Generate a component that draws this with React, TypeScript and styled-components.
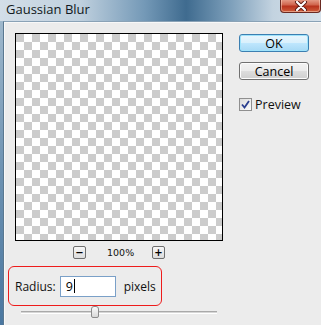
import React from "react";
import styled, { createGlobalStyle } from "styled-components";

const Global = createGlobalStyle`
  html, body { margin: 0; padding: 0; }
  body { width: 321px; height: 325px; overflow: hidden; font-family: "Noto Sans", "DejaVu Sans", sans-serif; }
  #root { width: 321px; height: 325px; }
`;

const Window = styled.div`
  width: 321px;
  height: 325px;
  display: flex;
  flex-direction: column;
  background: linear-gradient(90deg, #d3dee8 0%, #bfd0de 25%, #7499b7 45%, #3f6b8f 58%, #7ea0bb 72%, #c3d3e0 85%, #d6e1ea 100%);
  overflow: hidden;
`;

const TitleBar = styled.div`
  height: 21px;
  flex: none;
  display: flex;
  align-items: flex-start;
  justify-content: space-between;
`;

const Title = styled.span`
  font-family: "Open Sans", "Noto Sans", sans-serif;
  font-size: 13px;
  line-height: 18px;
  color: #101820;
  margin: 0 0 0 6px;
`;

const CloseButton = styled.div`
  width: 41px;
  height: 14px;
  margin-top: -1px;
  border: 1px solid #6a2a22;
  border-top: none;
  border-radius: 0 0 4px 4px;
  background: linear-gradient(180deg, #e8a38f 0%, #d0654d 45%, #b8321c 55%, #cf5e3c 100%);
  box-shadow: inset 0 0 0 1px rgba(255, 220, 200, 0.5);
  display: flex;
  align-items: center;
  justify-content: center;
  box-sizing: border-box;
`;

const Body = styled.div`
  flex: 1;
  display: flex;
`;

const LeftFrame = styled.div`
  width: 3px;
  flex: none;
  background: linear-gradient(180deg, #9fb8cc 0%, #6d92b2 50%, #4a77a0 100%);
`;

const Client = styled.div`
  flex: 1;
  display: flex;
  align-items: flex-start;
  background: #ececec;
  border-left: 1px solid #5a7890;
  border-top: 1px solid #8aa2b6;
  box-shadow: inset 1px 1px 0 #f8f8f8;
  padding: 11px 0 0 4px;
`;

const LeftCol = styled.div`
  width: 215px;
  display: flex;
  flex-direction: column;
`;

const PreviewBox = styled.div`
  margin-left: 7px;
  width: 208px;
  height: 208px;
  box-sizing: border-box;
  border: 1px solid #000;
  background-color: #fff;
  background-image:
    linear-gradient(45deg, #cccccc 25%, transparent 25%, transparent 75%, #cccccc 75%),
    linear-gradient(45deg, #cccccc 25%, transparent 25%, transparent 75%, #cccccc 75%);
  background-size: 16px 16px;
  background-position: 8px 0, 0 8px;
`;

const ZoomRow = styled.div`
  margin: 5px 0 0 7px;
  width: 208px;
  height: 13px;
  display: flex;
  align-items: center;
  justify-content: center;
  gap: 21px;
`;

const ZoomButton = styled.div`
  width: 13px;
  height: 13px;
  box-sizing: border-box;
  border: 1px solid #6e6e6e;
  border-radius: 2px;
  background: linear-gradient(180deg, #f6f6f6 0%, #dcdcdc 100%);
  display: flex;
  align-items: center;
  justify-content: center;
  font-family: "DejaVu Sans", sans-serif;
  font-size: 10px;
  line-height: 1;
  color: #000;
  font-weight: bold;
`;

const ZoomLabel = styled.span`
  font-family: "DejaVu Sans", sans-serif;
  font-size: 9.5px;
  color: #111;
  width: 24px;
  text-align: center;
`;

const RadiusBox = styled.div`
  margin-top: 7px;
  width: 154px;
  height: 40px;
  box-sizing: border-box;
  border: 1px solid #ee1c1c;
  border-radius: 6px;
  display: flex;
  align-items: center;
  padding-left: 6px;
`;

const Label = styled.span`
  font-family: "Open Sans", "Noto Sans", sans-serif;
  font-size: 12px;
  color: #111;
`;

const InputBox = styled.div`
  margin-left: 4px;
  width: 56px;
  height: 21px;
  box-sizing: border-box;
  border: 1px solid #7aa0c8;
  background: #fff;
  display: flex;
  align-items: center;
  padding-left: 5px;
  font-family: "Open Sans", "Noto Sans", sans-serif;
  font-size: 12.5px;
  color: #000;
`;

const Caret = styled.span`
  display: inline-block;
  width: 1px;
  height: 14px;
  background: #000;
  margin-left: 1px;
`;

const Unit = styled.span`
  margin-left: 8px;
  font-family: "Open Sans", "Noto Sans", sans-serif;
  font-size: 12px;
  color: #111;
`;

const SliderRow = styled.div`
  position: relative;
  margin-left: 13px;
  width: 196px;
  height: 12px;
`;

const Track = styled.div`
  position: absolute;
  left: 0;
  right: 0;
  top: 5px;
  height: 3px;
  box-sizing: border-box;
  border-top: 1px solid #a9a9a9;
  border-bottom: 1px solid #ffffff;
  background: #d6d6d6;
`;

const Thumb = styled.div`
  position: absolute;
  left: 70px;
  top: 0;
  width: 8px;
  height: 12px;
  box-sizing: border-box;
  border: 1px solid #8a8a8a;
  border-radius: 3px 3px 2px 2px;
  background: linear-gradient(180deg, #fafafa 0%, #d8d8d8 100%);
`;

const RightCol = styled.div`
  margin-left: 16px;
  display: flex;
  flex-direction: column;
`;

const Button = styled.div<{ $default?: boolean }>`
  width: 70px;
  height: 18px;
  box-sizing: border-box;
  border: 1px solid ${(p) => (p.$default ? "#3c7fb1" : "#707070")};
  border-radius: 3px;
  background: ${(p) =>
    p.$default
      ? "linear-gradient(180deg, #eaf6fd 0%, #d9f0fc 48%, #bee6fd 52%, #a7d9f5 100%)"
      : "linear-gradient(180deg, #f2f2f2 0%, #ebebeb 48%, #dddddd 52%, #cfcfcf 100%)"};
  box-shadow: inset 0 0 0 1px ${(p) => (p.$default ? "#9fe3fb" : "#fcfcfc")};
  display: flex;
  align-items: center;
  justify-content: center;
  font-family: "Open Sans", "Noto Sans", sans-serif;
  font-size: 12.5px;
  color: #000;
  margin-top: ${(p) => (p.$default ? "1px" : "10px")};
`;

const CheckRow = styled.label`
  margin-top: 16px;
  display: flex;
  align-items: center;
  gap: 3px;
  font-family: "Open Sans", "Noto Sans", sans-serif;
  font-size: 12.5px;
  color: #111;
`;

const CheckBox = styled.div`
  width: 13px;
  height: 13px;
  box-sizing: border-box;
  border: 1px solid #8f8f8f;
  background: linear-gradient(135deg, #dcdcdc 0%, #fbfbfb 100%);
  display: flex;
  align-items: center;
  justify-content: center;
`;

export default function App() {
  return (
    <>
      <Global />
      <Window>
        <TitleBar>
          <Title>Gaussian Blur</Title>
          <CloseButton>
            <svg width="14" height="10" viewBox="0 0 14 10">
              <path d="M3 1 L11 9 M11 1 L3 9" stroke="#5a1a12" strokeWidth="4" strokeLinecap="round" />
              <path d="M3 1 L11 9 M11 1 L3 9" stroke="#ffffff" strokeWidth="2.2" strokeLinecap="round" />
            </svg>
          </CloseButton>
        </TitleBar>
        <Body>
          <LeftFrame />
          <Client>
            <LeftCol>
              <PreviewBox />
              <ZoomRow>
                <ZoomButton>−</ZoomButton>
                <ZoomLabel>100%</ZoomLabel>
                <ZoomButton>+</ZoomButton>
              </ZoomRow>
              <RadiusBox>
                <Label>Radius:</Label>
                <InputBox>
                  9<Caret />
                </InputBox>
                <Unit>pixels</Unit>
              </RadiusBox>
              <SliderRow>
                <Track />
                <Thumb />
              </SliderRow>
            </LeftCol>
            <RightCol>
              <Button $default>OK</Button>
              <Button>Cancel</Button>
              <CheckRow>
                <CheckBox>
                  <svg width="9" height="9" viewBox="0 0 9 9">
                    <path d="M1 4.5 L3.5 7.5 L8 1" stroke="#2a3f8f" strokeWidth="1.8" fill="none" />
                  </svg>
                </CheckBox>
                Preview
              </CheckRow>
            </RightCol>
          </Client>
        </Body>
      </Window>
    </>
  );
}
